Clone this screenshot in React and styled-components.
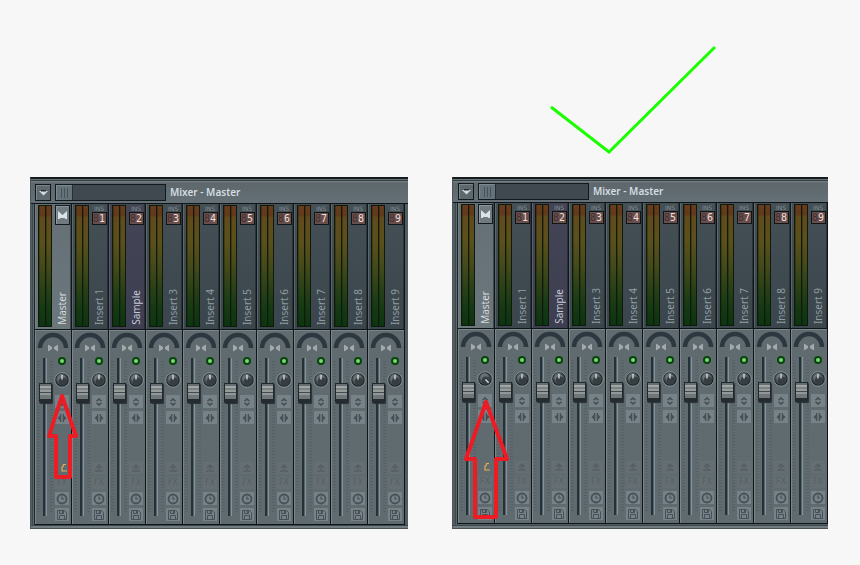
import React from 'react';
import styled, { createGlobalStyle } from 'styled-components';

const GlobalStyle = createGlobalStyle`
  * {
    box-sizing: border-box;
  }
  body {
    margin: 0;
    background: #f7f7f7;
    font-family: "Noto Sans", "Open Sans", sans-serif;
  }
  button, input {
    margin: 0;
    padding: 0;
    border: 0;
    font: inherit;
  }
  svg {
    display: block;
  }
`;

const Page = styled.main`
  display: grid;
  grid-template-columns: 378fr 376fr;
  gap: 44px;
  padding: 0 32px 36px 30px;
`;

const Example = styled.section`
  position: relative;
  min-width: 0;
`;

const Verdict = styled.div`
  height: 177px;
  padding: 43px 0 0 96px;
`;

const Window = styled.div`
  display: flex;
  flex-direction: column;
  padding-bottom: ${p => (p.$raised ? 5 : 4)}px;
  background: #525d62;
  border-left: 1px solid #4d575a;
  border-top: 2px solid #151b1f;
  box-shadow: inset 0 -1px #495155, inset 0 -3px #727d81, inset 0 -4px #3d474b;
  overflow: hidden;
`;

const Header = styled.header`
  display: flex;
  align-items: flex-start;
  height: ${p => (p.$raised ? 24 : 25)}px;
  padding: ${p => (p.$raised ? '4px 0 0 5px' : '5px 0 0 4px')};
  background: linear-gradient(#687378 1px, #343e43 1px, #343e43 2px, #727c80 2px, #727c80 3px, #5d676c 4px, #647076);
  border-bottom: 1px solid #0e1418;
`;

const MenuButton = styled.button`
  display: grid;
  place-items: center;
  width: 16px;
  height: 17px;
  background: #5d696f;
  border: 1px solid #12191d;
  box-shadow: inset 1px 1px #7a868b;
`;

const Slot = styled.div`
  display: flex;
  width: 111px;
  height: 17px;
  margin: 0 4px;
  background: #3f494f;
  border: 1px solid #12191d;
`;

const Grip = styled.button`
  display: grid;
  place-items: center;
  width: 17px;
  background: #66727a;
  border-right: 1px solid #252f34;
  box-shadow: inset 1px 1px #7c888d;
`;

const Title = styled.h1`
  margin: 0;
  color: #d3dce1;
  font-size: 10px;
  font-weight: 600;
  line-height: 16px;
  white-space: nowrap;
`;

const Channels = styled.div`
  display: flex;
  margin: ${p => (p.$raised ? '0 0 0 5px' : '0 3px 0 4px')};
  background: #525d62;
  box-shadow: -1px 0 #1d2529, -2px 0 #5d686c, -3px 0 #3d474c;
  border-bottom: 1px solid #0e1418;
`;

const Channel = styled.div`
  display: flex;
  flex-direction: column;
  flex: 1 1 37px;
  min-width: 37px;
  border-right: 1px solid #0f1519;
`;

const tones = {
  master: 'linear-gradient(#647076, #6c777c)',
  sample: 'linear-gradient(#434555, #3d3e50)',
  insert: 'linear-gradient(#445056, #3a454c)',
};

const Upper = styled.div`
  display: grid;
  grid-template-columns: 14px 1fr;
  height: 126px;
  padding: 1px 0 2px 3px;
  background: ${p => tones[p.$tone]};
  border-bottom: 1px solid #0e1418;
  box-shadow: inset 1px 0 rgba(130, 145, 150, 0.4), inset -1px 0 rgba(20, 28, 32, 0.5);
`;

const Meter = styled.div`
  display: grid;
  grid-template-columns: 1fr 1fr;
  gap: 1px;
  padding: 1px;
  background: #101a0c;
`;

const MeterBar = styled.i`
  background: linear-gradient(#683c1c 0, #63391b 10px, #614a1c 11px, #5b501b 30%, #454a1a 50%, #2b4118 68%, #153a14 85%, #0b3510);
  box-shadow: inset 1px 0 rgba(20, 30, 5, 0.35);
`;

const Label = styled.div`
  display: flex;
  flex-direction: column;
  align-items: center;
  justify-content: space-between;
  min-width: 0;
  padding: 0 0 2px 1px;
`;

const Tag = styled.span`
  display: block;
  color: #859196;
  font-family: "DejaVu Sans", sans-serif;
  font-size: 6px;
  line-height: 7px;
  text-align: center;
`;

const Digits = styled.span`
  display: grid;
  grid-template-columns: 6px 6px;
  place-content: center;
  width: 15px;
  height: 13px;
  background: #684f4c;
  border: 1px solid #101518;
  color: #f0dedb;
  font: 10px/11px "DejaVu Sans Mono", monospace;

  span {
    color: #45302f;
  }
`;

const MasterBadge = styled.span`
  display: grid;
  place-items: center;
  width: 15px;
  height: 20px;
  background: #6f7b81;
  border: 1px solid #13191c;
  box-shadow: inset 1px 1px #8a969b;
`;

const Name = styled.span`
  writing-mode: vertical-rl;
  transform: rotate(180deg);
  color: ${p => p.$color};
  font-size: 10px;
  line-height: 14px;
  white-space: nowrap;
`;

const Lower = styled.div`
  height: 194px;
  background: #606b70;
  box-shadow: inset 1px 1px #7a868a;
`;

const Strip = styled.div`
  display: grid;
  grid-template-columns: 20px 14px;
  height: 168px;
`;

const tick = 'repeating-linear-gradient(#555f64 0 1px, transparent 1px 3px)';

const FaderWell = styled.div`
  height: 160px;
  padding: 2px 0 0 4px;
  background: ${tick} 2px 5px / 3px 152px no-repeat, ${tick} 15px 5px / 3px 152px no-repeat;
`;

const Fader = styled.input`
  display: block;
  appearance: none;
  writing-mode: vertical-lr;
  direction: rtl;
  width: 13px;
  height: 158px;
  background: linear-gradient(90deg, #263137 2px, #55636b 2px, #55636b 3px, #84939b 3px) 4px 0 / 4px 100% no-repeat;

  &::-webkit-slider-thumb {
    appearance: none;
    width: 13px;
    height: 20px;
    border: 1px solid #20282c;
    border-bottom: 4px solid #252c30;
    border-radius: 1px;
    background: linear-gradient(#656e72 0 2px, #a1a5a5 2px 4px, #7c8182 4px 6px, #969b9b 6px 8px, #414a4d 8px 9px, #929797 9px 11px, #70777a 11px);
    box-shadow: 1px 1px 1px #293136;
  }
`;

const Controls = styled.div`
  display: flex;
  flex-direction: column;
  align-items: center;
  gap: 3px;
  padding-bottom: 3px;
`;

const Led = styled.input`
  appearance: none;
  flex: none;
  width: 8px;
  height: 8px;
  margin: 1px 0 4px;
  border: 2px solid #123d16;
  border-radius: 50%;
  background: #3b5a3c;

  &:checked {
    background: #6fe068;
    box-shadow: 0 0 1px #2d8b30;
  }
`;

const KnobButton = styled.button`
  width: 16px;
  height: 16px;
  margin-bottom: 4px;
  background: none;
`;

const SmallButton = styled.button`
  display: grid;
  place-items: center;
  width: 14px;
  height: ${p => (p.$faint ? 12 : 13)}px;
  background: ${p => (p.$bare ? 'transparent' : p.$faint ? '#656f73' : '#778288')};
  color: ${p => (p.$faint ? '#555f63' : '#465056')};
  font-family: "DejaVu Sans", sans-serif;
  font-size: 8px;
  line-height: 12px;
`;

const Spacer = styled.div`
  flex: 1;
`;

const Arrow = styled.svg`
  position: absolute;
  left: ${p => p.$x}px;
  top: ${p => p.$y}px;
  pointer-events: none;
`;

const PanArc = () => (
  <svg width="36" height="26" viewBox="0 0 36 26" aria-hidden="true">
    <path d="M5 18a13 13 0 0 1 26 0" fill="none" stroke="#2d373f" strokeWidth="4.500" />
    <path d="M13 14.500v7l4-2.500v-2zM23 14.500v7l-4-2.500v-2z" fill="#a4aaac" />
  </svg>
);

const Knob = ({ angle = 0 }) => (
  <svg width="16" height="16" viewBox="0 0 16 16" aria-hidden="true">
    <circle cx="8" cy="8" r="7.300" fill="#20272b" stroke="#87949a" strokeWidth="1" />
    <circle cx="7.800" cy="7.600" r="5.800" fill="#434c50" />
    <circle cx="7.400" cy="6.400" r="4.200" fill="#687175" />
    <circle cx="8.800" cy="9.400" r="4" fill="#363e42" />
    <path d="M8 2.800v4.600" stroke="#d4d9db" strokeWidth="1.400" transform={`rotate(${angle} 8 8)`} />
  </svg>
);

const Swap = ({ turned }) => (
  <svg width="10" height="10" viewBox="0 0 10 10" fill="currentColor" aria-hidden="true">
    {turned ? (
      <path d="M0.500 5L3 2.500V1h1.300v8H3V7.500zM9.500 5L7 2.500V1H5.700v8H7V7.500z" />
    ) : (
      <path d="M5 1l3 3H6.500L5 3 3.500 4H2zM5 9l3-3H6.500L5 7 3.500 6H2z" stroke="currentColor" strokeWidth="0.500" />
    )}
  </svg>
);

const Route = ({ lit }) => (
  <svg width="12" height="12" viewBox="0 0 12 12" fill="none" aria-hidden="true">
    {lit ? (
      <path d="M10 2.500H7.500V4L6 5v4h5" stroke="#e5ad50" strokeWidth="1.200" />
    ) : (
      <path d="M6 8V3M3 6l3-3 3 3M2 9h8" stroke="currentColor" strokeWidth="1.300" />
    )}
  </svg>
);

const Clock = () => (
  <svg width="12" height="12" viewBox="0 0 12 12" fill="none" stroke="currentColor" aria-hidden="true">
    <circle cx="6" cy="6" r="4.500" strokeWidth="1.800" />
    <path d="M6 3.500V6h2" strokeWidth="1.200" />
  </svg>
);

const Disk = () => (
  <svg width="12" height="12" viewBox="0 0 12 12" fill="none" stroke="currentColor" aria-hidden="true">
    <path d="M1.500 1.500h7l2 2v7h-9z" />
    <path d="M3.500 1.500v3h4v-3M3.500 10.500v-4h5v4M6.500 2v2" />
  </svg>
);

const channels = [
  { name: 'Master', tone: 'master', color: '#d4dade' },
  { name: 'Insert 1', tone: 'insert', color: '#909ca1' },
  { name: 'Sample', tone: 'sample', color: '#c5c9d5' },
  ...[3, 4, 5, 6, 7, 8, 9].map(n => ({ name: `Insert ${n}`, tone: 'insert', color: '#909ca1' })),
];

function MixerChannel({ channel, number, angle }) {
  const { name, tone, color } = channel;
  const master = tone === 'master';

  return (
    <Channel>
      <Upper $tone={tone}>
        <Meter>
          <MeterBar />
          <MeterBar />
        </Meter>
        <Label>
          {master ? (
            <MasterBadge>
              <svg width="9" height="8" viewBox="0 0 9 8" aria-hidden="true">
                <path d="M0 0l4.500 4L9 0v8H7.500L6.500 7h-4L1.500 8H0z" fill="#dce3e6" />
              </svg>
            </MasterBadge>
          ) : (
            <div>
              <Tag>INS</Tag>
              <Digits><span aria-hidden="true">8</span>{number}</Digits>
            </div>
          )}
          <Name $color={color}>{name}</Name>
        </Label>
      </Upper>
      <Lower>
        <PanArc />
        <Strip>
          <FaderWell>
            <Fader type="range" min="0" max="100" defaultValue="82" aria-label={`${name} volume`} />
          </FaderWell>
          <Controls>
            <Led type="checkbox" defaultChecked aria-label={`${name} on`} />
            <KnobButton type="button" aria-label={`${name} stereo separation`}><Knob angle={angle} /></KnobButton>
            <SmallButton type="button" aria-label="Reverse polarity"><Swap /></SmallButton>
            <SmallButton type="button" aria-label="Swap channels"><Swap turned /></SmallButton>
            <Spacer />
            <SmallButton type="button" $faint $bare={master} aria-label="Route"><Route lit={master} /></SmallButton>
            <SmallButton type="button" $faint>FX</SmallButton>
            <SmallButton type="button" aria-label="Latency"><Clock /></SmallButton>
            <SmallButton type="button" aria-label="Record to disk"><Disk /></SmallButton>
          </Controls>
        </Strip>
      </Lower>
    </Channel>
  );
}

function Mixer({ raised, masterAngle }) {
  return (
    <Window $raised={raised}>
      <Header $raised={raised}>
        <MenuButton type="button" aria-label="Mixer menu">
          <svg width="9" height="6" viewBox="0 0 9 6" aria-hidden="true">
            <path d="M0 1h9L4.500 5.500z" fill="#d3dade" />
            <path d="M2 0h5v1.500H2z" fill="#263035" />
          </svg>
        </MenuButton>
        <Slot>
          <Grip type="button" aria-label="Drag preset">
            <svg width="9" height="10" viewBox="0 0 9 10" aria-hidden="true">
              <path d="M1.500 0v10M4.500 0v10M7.500 0v10" stroke="#465259" strokeWidth="1" />
            </svg>
          </Grip>
        </Slot>
        <Title>Mixer - Master</Title>
      </Header>
      <Channels $raised={raised}>
        {channels.map((channel, i) => (
          <MixerChannel key={channel.name} channel={channel} number={i} angle={i === 0 ? masterAngle : 0} />
        ))}
      </Channels>
    </Window>
  );
}

function App() {
  return (
    <>
      <GlobalStyle />
      <Page>
        <Example>
          <Verdict />
          <Mixer />
          <Arrow $x={14} $y={388} width="36" height="92" viewBox="0 0 36 92" aria-hidden="true">
            <path d="M18 8L5 48h7v41h14V48h6z" fill="none" stroke="#ed1c24" strokeWidth="4" strokeLinejoin="round" />
          </Arrow>
        </Example>
        <Example>
          <Verdict>
            <svg width="172" height="114" viewBox="0 0 172 114" role="img" aria-label="Correct">
              <path d="M3 64l58 45L167 4" fill="none" stroke="#1aff00" strokeWidth="3" />
            </svg>
          </Verdict>
          <Mixer raised masterAngle={135} />
          <Arrow $x={8} $y={396} width="52" height="126" viewBox="0 0 52 126" aria-hidden="true">
            <path d="M26 6L6 63h9v58h21V63h11z" fill="none" stroke="#ed1c24" strokeWidth="4" strokeLinejoin="round" />
          </Arrow>
        </Example>
      </Page>
    </>
  );
}

export default App;
